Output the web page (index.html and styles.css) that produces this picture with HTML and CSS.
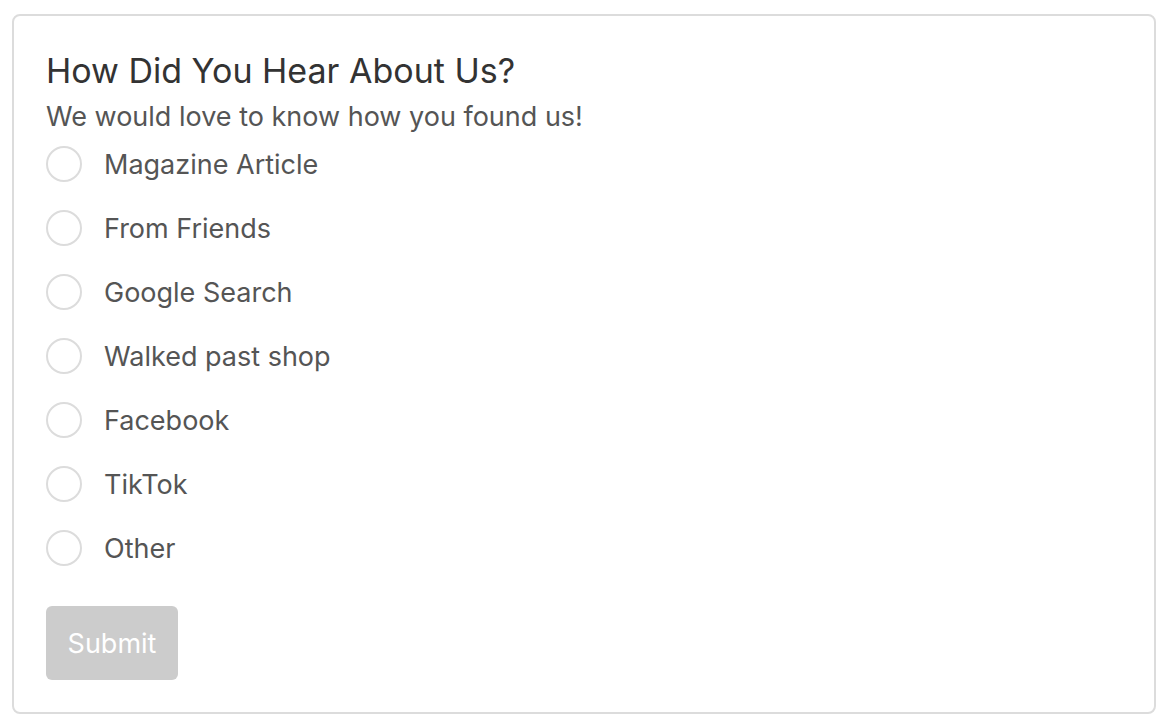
FILE: index.html
```html
<!DOCTYPE html>
<html lang="en">
<head>
<meta charset="utf-8">
<title>How Did You Hear About Us?</title>
<link rel="stylesheet" href="styles.css">
</head>
<body>
<form class="card">
  <h1 class="title">How Did You Hear About Us?</h1>
  <p class="subtitle">We would love to know how you found us!</p>
  <div class="options">
    <label class="option"><span class="radio"></span><span class="label">Magazine Article</span></label>
    <label class="option"><span class="radio"></span><span class="label">From Friends</span></label>
    <label class="option"><span class="radio"></span><span class="label">Google Search</span></label>
    <label class="option"><span class="radio"></span><span class="label">Walked past shop</span></label>
    <label class="option"><span class="radio"></span><span class="label">Facebook</span></label>
    <label class="option"><span class="radio"></span><span class="label">TikTok</span></label>
    <label class="option"><span class="radio"></span><span class="label">Other</span></label>
  </div>
  <button type="button" class="submit" disabled>Submit</button>
</form>
</body>
</html>
```
FILE: styles.css
```css
* { box-sizing: border-box; }
html, body { margin: 0; background: #fff; }
body {
  padding: 14px 12px;
  font-family: Inter, "Liberation Sans", Arial, sans-serif;
  -webkit-font-smoothing: antialiased;
}
.card {
  height: 700px;
  border: 2px solid #dcdcdc;
  border-radius: 8px;
  padding: 33px 32px 0;
  display: flex;
  flex-direction: column;
  align-items: flex-start;
}
.title {
  margin: 0;
  font-size: 34px;
  line-height: 44px;
  font-weight: 400;
  color: #333;
}
.subtitle {
  margin: 7px 0 0;
  font-size: 27px;
  line-height: 34px;
  color: #555;
}
.options {
  display: flex;
  flex-direction: column;
  gap: 4px;
}
.option {
  display: flex;
  align-items: center;
  height: 60px;
}
.radio {
  width: 36px;
  height: 36px;
  border: 2px solid #dcdcdc;
  border-radius: 50%;
  flex: none;
}
.label {
  margin-left: 22px;
  font-size: 27px;
  color: #555;
}
.submit {
  flex: none;
  margin-top: 28px;
  width: 132px;
  height: 74px;
  border: none;
  border-radius: 6px;
  background: #cccccc;
  color: #fff;
  font-family: inherit;
  font-size: 27px;
  padding: 0;
}
```
